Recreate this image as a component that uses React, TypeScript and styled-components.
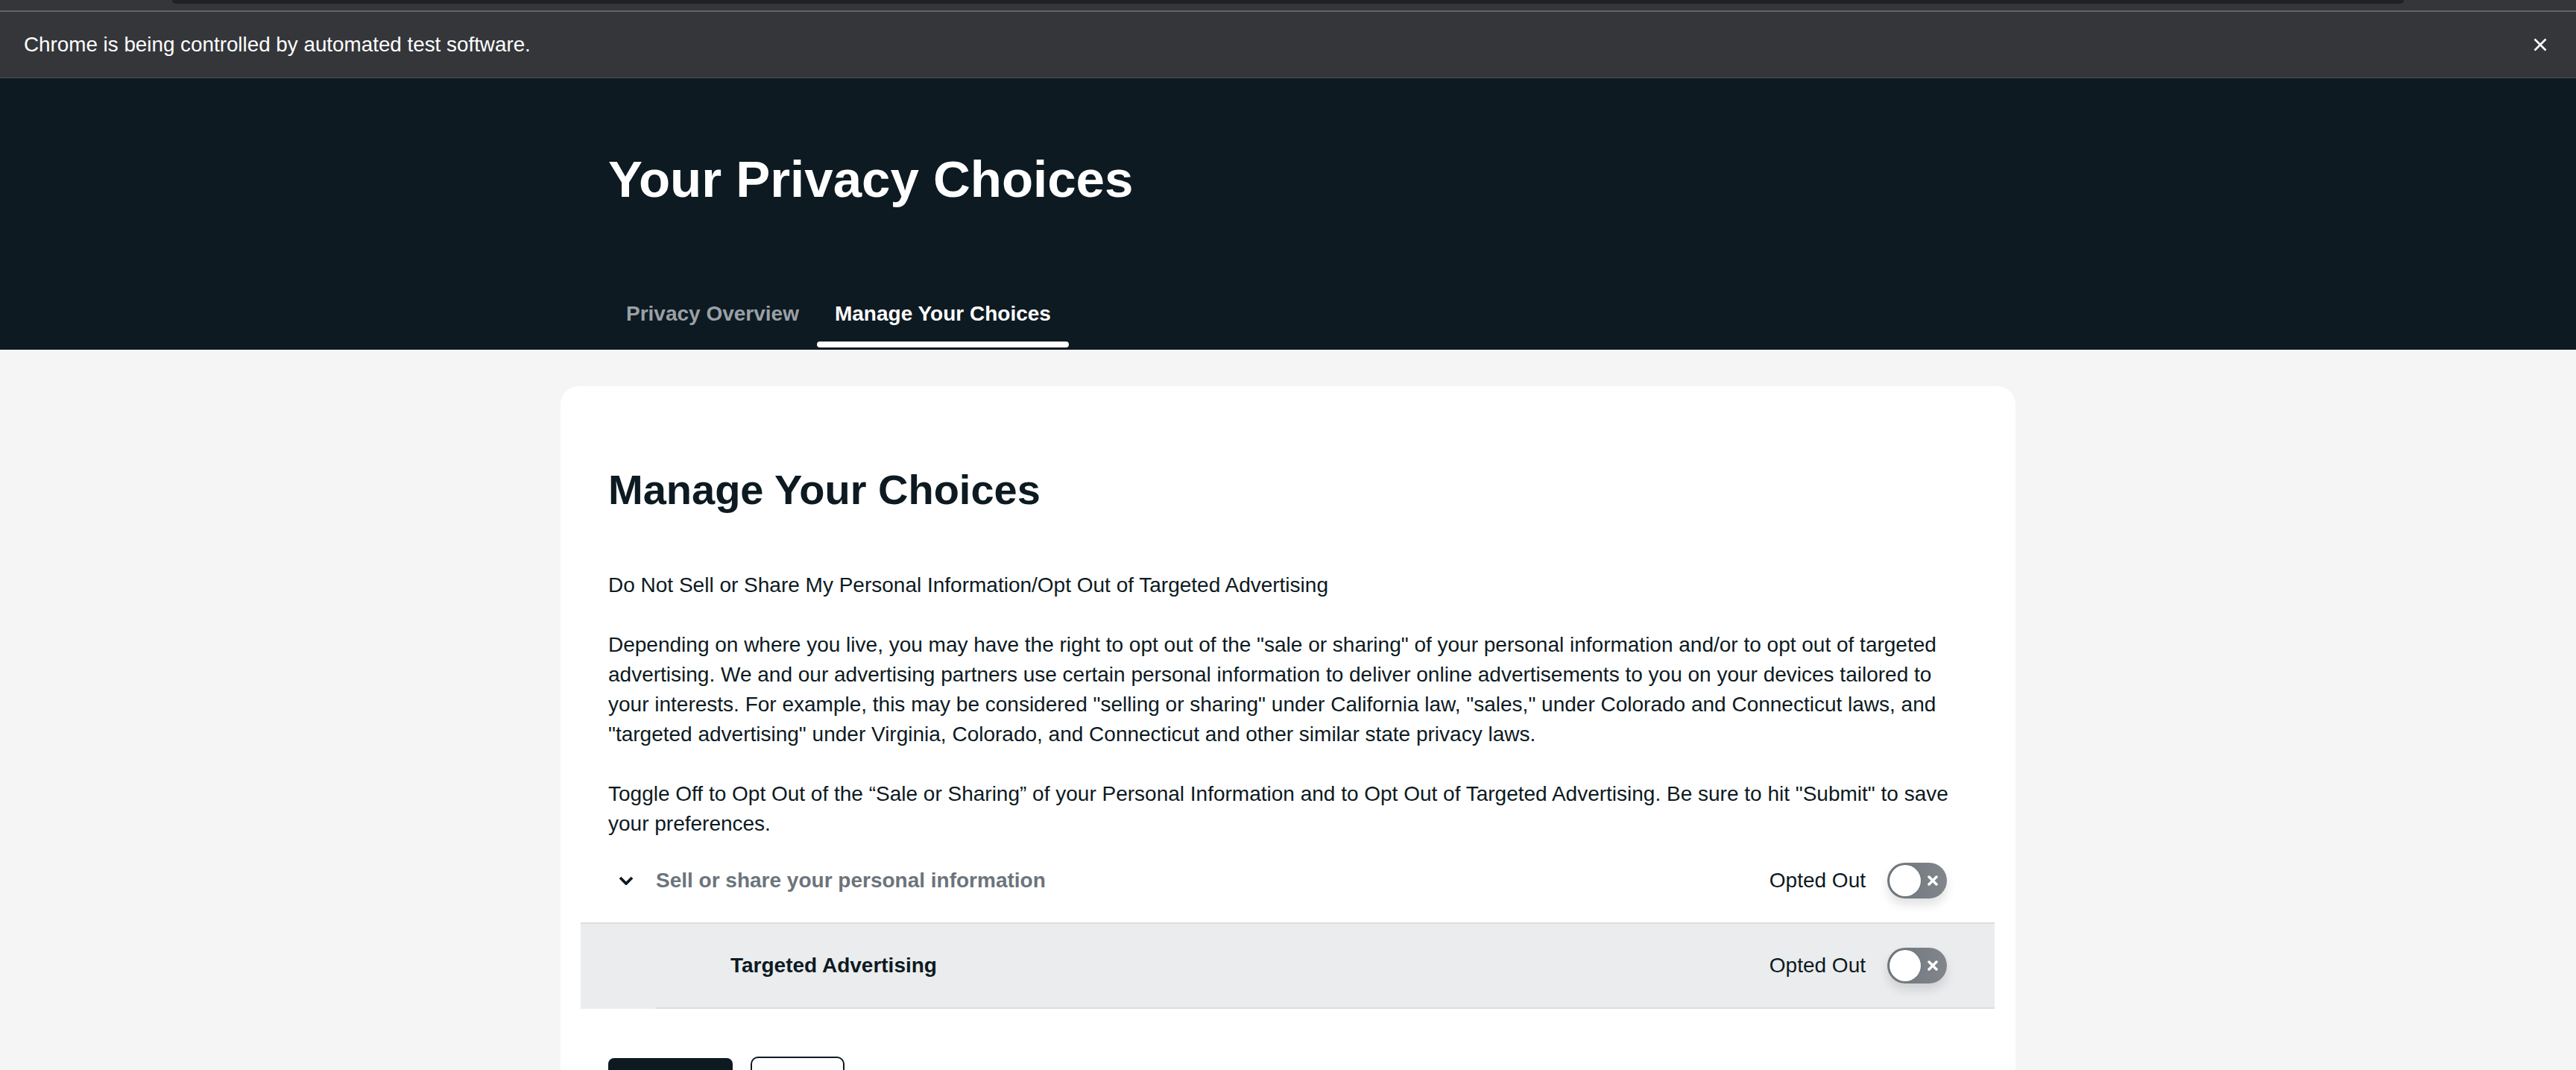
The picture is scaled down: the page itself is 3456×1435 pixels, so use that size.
import styled, {createGlobalStyle} from "styled-components";

const GlobalStyle = createGlobalStyle`
  body {
    margin: 0;
    background: #f5f5f5;
    font-family: "Liberation Sans", Arial, Helvetica, sans-serif;
    color: #0d1a22;
  }
`

const BrowserTop = styled.div`
  height: 14px;
  background: #35363a;
  border-bottom: 2px solid #5f6368;
`

const AddressBarEdge = styled.div`
  height: 5px;
  margin: 0 231px;
  background: #202124;
  border-radius: 0 0 18px 18px;
`

const InfoBar = styled.div`
  height: 88px;
  background: #35363a;
  border-bottom: 1px solid #4a4d51;
  display: flex;
  align-items: center;
  justify-content: space-between;
  padding: 0 39px 0 32px;
  color: #ffffff;
  font-size: 27.8px;
`

const CloseButton = styled.button`
  background: none;
  border: none;
  padding: 0;
  display: flex;
  cursor: pointer;
`

const Header = styled.header`
  background: #0d1a22;
  height: 364px;
`

const HeaderInner = styled.div`
  width: 1952px;
  margin: 0 auto;
  padding: 95px 64px 0;
  box-sizing: border-box;
`

const PageTitle = styled.h1`
  margin: 0;
  font-size: 69px;
  line-height: 82px;
  font-weight: 700;
  color: #ffffff;
`

const Tabs = styled.nav`
  display: flex;
  margin-top: 123px;
`

const Tab = styled.button<{ $active?: boolean }>`
  position: relative;
  background: none;
  border: none;
  padding: 0 24px 32px;
  font: inherit;
  font-size: 28px;
  line-height: 32px;
  font-weight: 700;
  color: ${p => p.$active ? "#ffffff" : "#9aa0a6"};
  cursor: pointer;

  &::after {
    content: "";
    display: ${p => p.$active ? "block" : "none"};
    position: absolute;
    left: 0;
    right: 0;
    bottom: 3px;
    height: 8px;
    border-radius: 4px;
    background: #ffffff;
  }
`

const Card = styled.main`
  width: 1952px;
  margin: 49px auto 0;
  background: #ffffff;
  border-radius: 24px;
  padding: 64px 64px 80px;
  box-sizing: border-box;
`

const SectionTitle = styled.h2`
  margin: 41px 0 75px;
  font-size: 56px;
  line-height: 1.2;
  font-weight: 700;
`

const Paragraph = styled.p`
  margin: 0 0 40px;
  font-size: 28px;
  line-height: 40px;

  &:last-of-type {
    margin-bottom: 0;
  }
`

const Accordion = styled.div`
  margin: 0 -36px 0 -37px;
`

const GroupRow = styled.div`
  height: 112px;
  display: flex;
  align-items: center;
  padding: 0 64px 0 51px;
  border-bottom: 2px solid #dcdddf;
`

const Chevron = styled.svg`
  width: 20px;
  height: 12px;
  margin-right: 30px;
  flex-shrink: 0;
`

const GroupLabel = styled.span`
  flex: 1;
  font-size: 28px;
  font-weight: 700;
  color: #6c747b;
`

const SubRow = styled.div`
  background: #ebecee;
  padding-left: 101px;
`

const SubRowInner = styled.div`
  height: 112px;
  display: flex;
  align-items: center;
  padding: 0 64px 0 100px;
  border-bottom: 2px solid #dcdddf;
`

const SubLabel = styled.span`
  flex: 1;
  font-size: 28px;
  font-weight: 700;
  color: #0d1a22;
`

const Status = styled.span`
  font-size: 28px;
  color: #0d1a22;
  margin-right: 29px;
`

const ToggleTrack = styled.div`
  width: 80px;
  height: 48px;
  border-radius: 24px;
  background: linear-gradient(to right, #6f767c, #80868b);
  display: flex;
  align-items: center;
  padding: 0 3px;
  box-sizing: border-box;
  box-shadow: 0 8px 14px rgba(0, 0, 0, 0.12);
`

const ToggleKnob = styled.div`
  width: 42px;
  height: 42px;
  border-radius: 50%;
  background: #ffffff;
  box-shadow: 0 0 0 1px rgba(0, 0, 0, 0.08);
  margin-right: 9px;
`

const Buttons = styled.div`
  display: flex;
  gap: 24px;
  margin-top: 64px;
  align-items: flex-start;
`

const PrimaryButton = styled.button`
  width: 167px;
  height: 80px;
  margin-top: 2px;
  border: none;
  border-radius: 8px;
  background: #0d1a22;
  color: #ffffff;
  font: inherit;
  font-size: 28px;
  font-weight: 700;
`

const SecondaryButton = styled.button`
  width: 126px;
  height: 80px;
  border: 2px solid #0d1a22;
  border-radius: 10px;
  background: #ffffff;
  color: #0d1a22;
  font: inherit;
  font-size: 28px;
  font-weight: 700;
`

const Toggle = () => (
    <ToggleTrack>
        <ToggleKnob/>
        <svg width="14" height="14" viewBox="0 0 14 14">
            <path d="M2 2 L12 12 M12 2 L2 12" stroke="#ffffff" strokeWidth="3.5" strokeLinecap="round"/>
        </svg>
    </ToggleTrack>
)

const App = () => {
    return (
        <>
            <GlobalStyle/>
            <BrowserTop>
                <AddressBarEdge/>
            </BrowserTop>
            <InfoBar>
                <span>Chrome is being controlled by automated test software.</span>
                <CloseButton>
                    <svg width="18" height="18" viewBox="0 0 18 18">
                        <path d="M1.5 1.5 L16.5 16.5 M16.5 1.5 L1.5 16.5" stroke="#ffffff" strokeWidth="2.6"/>
                    </svg>
                </CloseButton>
            </InfoBar>
            <Header>
                <HeaderInner>
                    <PageTitle>Your Privacy Choices</PageTitle>
                    <Tabs>
                        <Tab>Privacy Overview</Tab>
                        <Tab $active>Manage Your Choices</Tab>
                    </Tabs>
                </HeaderInner>
            </Header>
            <Card>
                <SectionTitle>Manage Your Choices</SectionTitle>
                <Paragraph>Do Not Sell or Share My Personal Information/Opt Out of Targeted Advertising</Paragraph>
                <Paragraph>
                    Depending on where you live, you may have the right to opt out of the "sale or sharing" of your
                    personal information and/or to opt out of targeted advertising. We and our advertising partners use
                    certain personal information to deliver online advertisements to you on your devices tailored to
                    your interests. For example, this may be considered "selling or sharing" under California law,
                    "sales," under Colorado and Connecticut laws, and "targeted advertising" under Virginia, Colorado,
                    and Connecticut and other similar state privacy laws.
                </Paragraph>
                <Paragraph>
                    Toggle Off to Opt Out of the “Sale or Sharing” of your Personal Information and to Opt Out of
                    Targeted Advertising. Be sure to hit "Submit" to save your preferences.
                </Paragraph>
                <Accordion>
                    <GroupRow>
                        <Chevron viewBox="0 0 20 12">
                            <path d="M2 2 L10 10 L18 2" fill="none" stroke="#0d1a22" strokeWidth="3.8"/>
                        </Chevron>
                        <GroupLabel>Sell or share your personal information</GroupLabel>
                        <Status>Opted Out</Status>
                        <Toggle/>
                    </GroupRow>
                    <SubRow>
                        <SubRowInner>
                            <SubLabel>Targeted Advertising</SubLabel>
                            <Status>Opted Out</Status>
                            <Toggle/>
                        </SubRowInner>
                    </SubRow>
                </Accordion>
                <Buttons>
                    <PrimaryButton>Submit</PrimaryButton>
                    <SecondaryButton>Cancel</SecondaryButton>
                </Buttons>
            </Card>
        </>
    )
}

export default App;
